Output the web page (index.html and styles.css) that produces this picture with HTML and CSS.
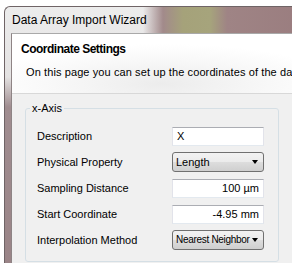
FILE: index.html
```html
<!DOCTYPE html>
<html>
<head>
  <title>Data Array Import Wizard</title>
  <link rel="stylesheet" href="styles.css">
</head>
<body>
  <div class="window">
    <div class="titlebar">Data Array Import Wizard</div>
    <div class="client">
      <div class="header">
        <h1>Coordinate Settings</h1>
        <p>On this page you can set up the coordinates of the data array.</p>
      </div>
      <div class="page">
        <fieldset class="group">
          <legend>x-Axis</legend>
          <div class="rows">
            <label>Description</label>
            <div class="textbox">X</div>

            <label>Physical Property</label>
            <div class="combo">Length<span class="arrow"></span></div>

            <label>Sampling Distance</label>
            <div class="textbox num">100 µm</div>

            <label>Start Coordinate</label>
            <div class="textbox num">-4.95 mm</div>

            <label>Interpolation Method</label>
            <div class="combo tight">Nearest Neighbor<span class="arrow"></span></div>
          </div>
        </fieldset>
      </div>
    </div>
  </div>
</body>
</html>
```

FILE: styles.css
```css
body {
  margin: 0;
  background: #fff;
  font-family: "Liberation Sans", Arial, sans-serif;
  font-size: 11px;
  color: #000;
  overflow: hidden;
}
.window {
  margin: 6px 0 0 4px;
  width: 300px;
  height: 256px;
  border-left: 1px solid #6f6466;
  border-top: 1px solid #6f6466;
  border-top-left-radius: 6px;
  background: linear-gradient(to bottom, #ececec 0, #e4e2e2 70px, #a08d90 100px, #9a8487 100%);
  display: flex;
  flex-direction: column;
  overflow: hidden;
}
.titlebar {
  height: 26px;
  line-height: 27px;
  padding-left: 7px;
  font-size: 12px;
  white-space: nowrap;
  background: linear-gradient(to right, rgba(160,136,138,0) 0, rgba(160,136,138,0) 138px, #a28a8b 158px, #a5a27a 178px, #a6a47c 205px, #9f8485 222px, #9a7d7f 100%);
}
.client {
  flex: 1;
  margin-left: 6px;
  border-top: 1px solid #a9a9a9;
  border-left: 1px solid #8e8485;
  background: #f0f0f0;
  display: flex;
  flex-direction: column;
}
.header {
  height: 60px;
  padding: 8px 0 0 9px;
  box-sizing: border-box;
  border-bottom: 1px solid #d8d8d8;
  background: radial-gradient(ellipse 180px 40px at 150px 50px, #ececec 0, #f8f8f8 60%, #fff 100%);
  white-space: nowrap;
  overflow: hidden;
}
.header h1 {
  margin: 0;
  font-size: 12px;
  line-height: 14px;
  font-weight: bold;
  letter-spacing: -0.5px;
}
.header p {
  margin: 10px 0 0 5px;
  line-height: 13px;
  letter-spacing: 0.1px;
}
.page {
  flex: 1;
  padding: 8px 0 0 13px;
}
.group {
  width: 254px;
  height: 160px;
  box-sizing: border-box;
  margin: 0;
  padding: 0;
  border: 1px solid #d5dfe5;
  border-radius: 3px;
}
.group legend {
  margin-left: 4px;
  padding: 0 2px;
  line-height: 13px;
}
.rows {
  display: grid;
  grid-template-columns: 135px 92px;
  grid-auto-rows: 20px;
  row-gap: 6px;
  align-items: center;
  padding: 11px 0 0 11px;
}
.textbox {
  height: 19px;
  box-sizing: border-box;
  padding: 0 4px;
  line-height: 17px;
  background: #fff;
  border: 1px solid #e2e3ea;
  border-top-color: #abadb3;
  border-bottom-color: #e3e9ef;
}
.textbox.num {
  text-align: right;
}
.combo {
  position: relative;
  height: 20px;
  box-sizing: border-box;
  padding: 0 3px;
  line-height: 18px;
  white-space: nowrap;
  border: 1px solid #707070;
  border-radius: 3px;
  background: linear-gradient(to bottom, #f2f2f2 0, #ebebeb 50%, #dddddd 50%, #cfcfcf 100%);
}
.combo.tight {
  font-size: 10px;
  letter-spacing: -0.3px;
}
.arrow {
  position: absolute;
  right: 5px;
  top: 7px;
  border-left: 3.5px solid transparent;
  border-right: 3.5px solid transparent;
  border-top: 4px solid #000;
}
```
